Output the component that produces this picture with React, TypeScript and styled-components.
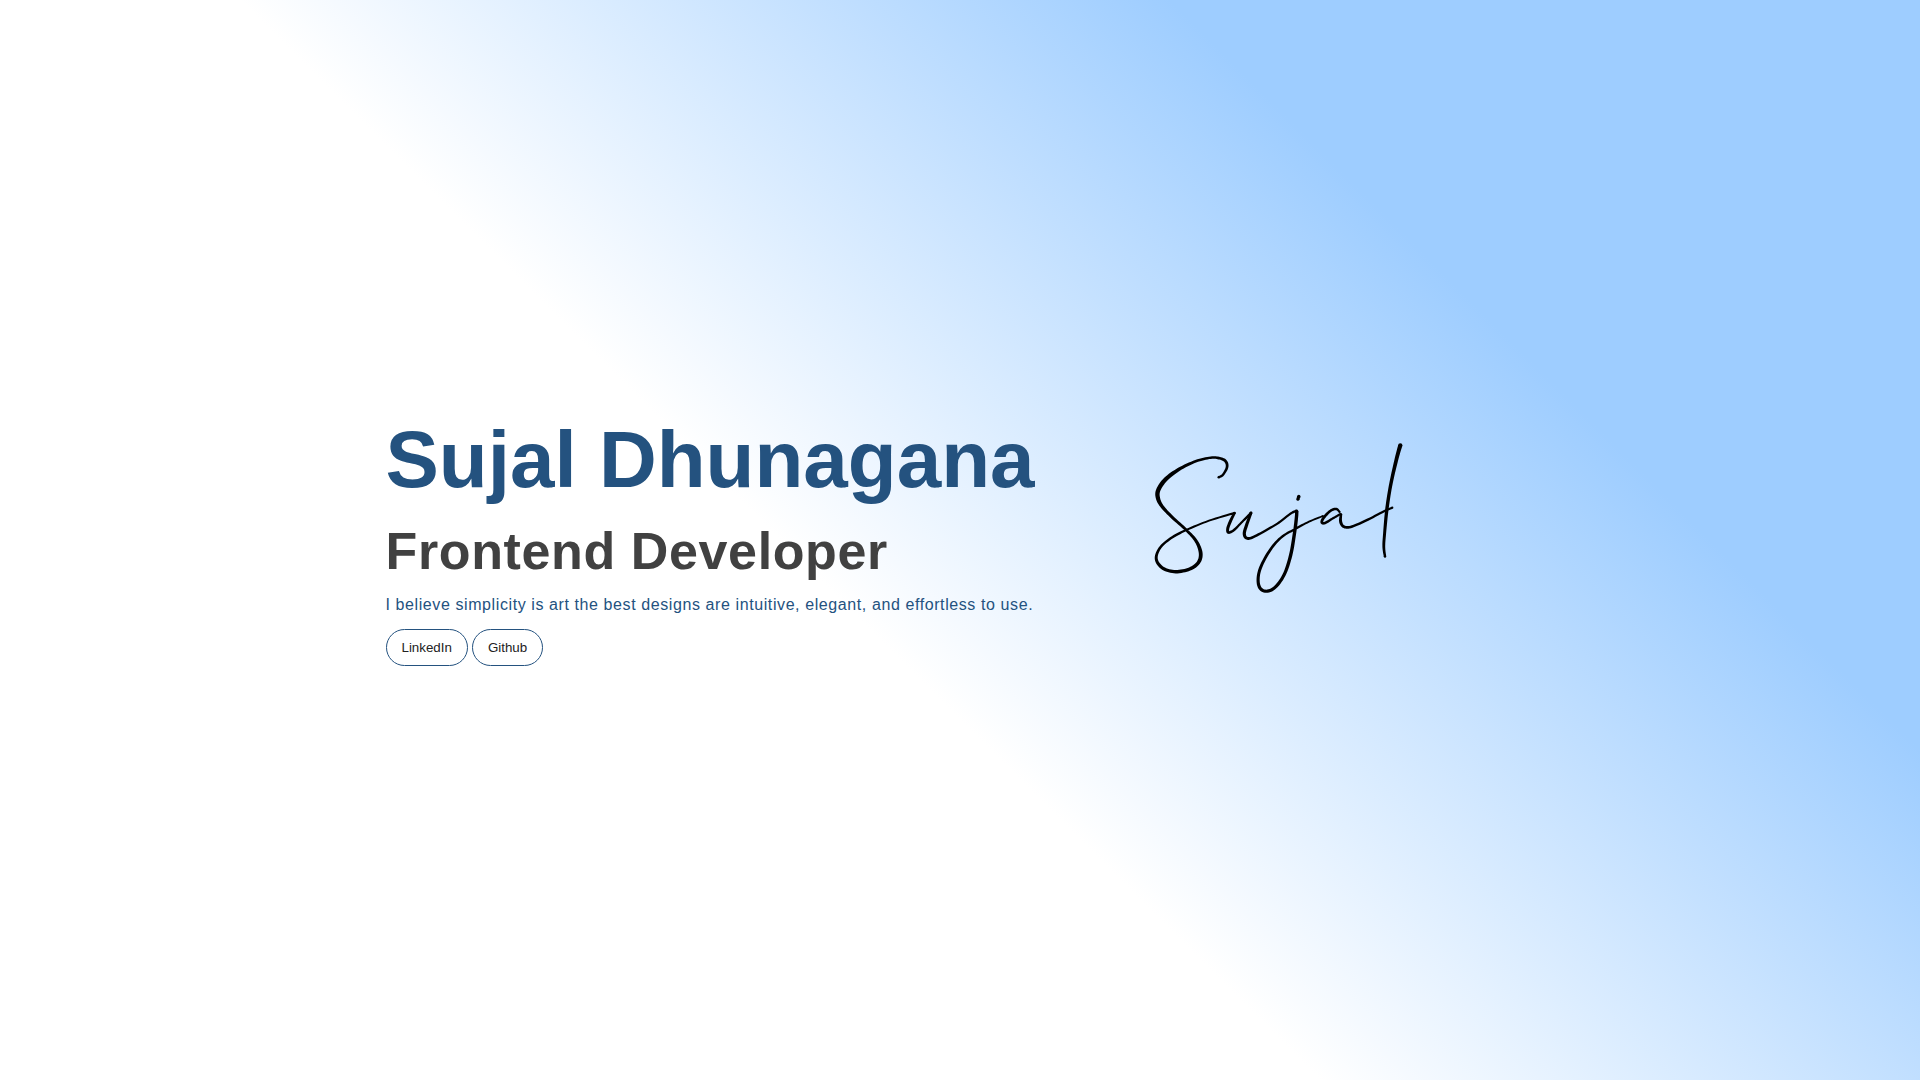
import React from "react";
import styled, { createGlobalStyle } from "styled-components";

const GlobalStyle = createGlobalStyle`
  * {
    box-sizing: border-box;
    margin: 0;
    padding: 0;
  }

  body {
    font-family: "Liberation Sans", Arial, sans-serif;
  }
`;

const Page = styled.main`
  display: flex;
  align-items: center;
  justify-content: center;
  gap: 20px;
  min-height: 100vh;
  background: linear-gradient(45deg, #ffffff 44%, #9ecdff 75%);
`;

const Intro = styled.section`
  display: flex;
  flex-direction: column;
  align-items: flex-start;
`;

const Name = styled.h1`
  color: #24527f;
  font-size: 80px;
  line-height: 92px;
`;

const Role = styled.h2`
  margin-top: 15px;
  color: #414141;
  font-size: 52px;
  line-height: 60px;
  letter-spacing: 0.012em;
`;

const Motto = styled.p`
  margin-top: 15px;
  color: #24527f;
  font-size: 16px;
  line-height: 18px;
  letter-spacing: 0.037em;
`;

const Links = styled.nav`
  display: flex;
  gap: 4px;
  margin-top: 15px;
`;

const LinkButton = styled.button`
  padding: 10px 15px;
  border: 1px solid #24527f;
  border-radius: 20px;
  background: transparent;
  color: #222222;
  font-family: inherit;
  cursor: pointer;
`;

const SignatureArt = styled.svg`
  flex: none;
  width: 480px;
  height: 240px;
  fill: #000000;
`;

// Each pen stroke is a list of [x, y, nib width].
type PenPoint = [number, number, number];

const penStrokes: PenPoint[][] = [
  // capital with its loop, up to the first peak
  [
    [1219.7, 477.3, 2], [1224, 474.7, 2], [1228, 467.3, 2.3], [1226.7, 461.3, 2.5],
    [1220.7, 458.3, 2.3], [1211.7, 457.7, 2], [1196.7, 461.3, 2.3], [1180, 469.3, 3],
    [1166.7, 479.3, 3.8], [1159.3, 490, 4], [1159, 498.3, 3.8], [1163.3, 506.7, 3],
    [1173.3, 517.3, 2.6], [1187.3, 530, 2.4], [1197.3, 541.3, 2.8], [1201.7, 553.3, 3.4],
    [1199.3, 562.7, 3.2], [1190.7, 569, 3], [1176.7, 571.7, 3], [1164, 568.3, 2.8],
    [1157.3, 559.3, 2.6], [1160.7, 548.3, 2.2], [1171.7, 538.3, 2], [1187.3, 530, 1.8],
    [1210, 520.7, 1.5], [1235.5, 513, 1.8],
  ],
  [
    [1235.5, 513, 2.2], [1231.7, 520.7, 2.6], [1228.8, 528.3, 2.6], [1229.5, 532.5, 2.4],
    [1235, 530, 2], [1243.3, 521.7, 1.8], [1252, 513, 2.2],
  ],
  [
    [1252, 513, 2.4], [1247.6, 525, 2.8], [1245.3, 533.3, 2.8], [1247.3, 538, 2.6],
    [1253.3, 537.5, 2.2], [1266.7, 530.5, 2], [1280, 522.5, 1.8], [1291.7, 513.5, 1.8],
    [1297.5, 511, 2.4],
  ],
  // descender loop and the link to the next letter
  [
    [1297.7, 511.5, 3], [1297.5, 516.7, 3], [1295.7, 531.7, 3], [1291.7, 555, 3],
    [1285, 575, 2.8], [1275, 588.3, 2.8], [1265, 591, 2.8], [1259.5, 584.3, 2.8],
    [1260.7, 570, 2.6], [1270, 551.7, 2.4], [1281.7, 537.8, 2], [1295.7, 529.2, 1.8],
    [1310, 521.7, 1.5], [1324, 516, 1.4],
  ],
  [[1299.8, 496.4, 3], [1298.9, 499.2, 2.6]],
  [
    [1340.7, 512, 1.6], [1337.3, 509, 2], [1331.7, 510.7, 2.2], [1325, 517.3, 2.4],
    [1322.8, 522.2, 2.4], [1326, 523, 2.2], [1334, 518.3, 1.8], [1341.5, 514, 1.8],
  ],
  [
    [1342, 514.5, 2], [1341.6, 521.5, 2.6], [1344.5, 526.5, 2.4], [1351.7, 526.9, 2.2],
    [1366.7, 520.7, 2], [1385, 511.3, 1.8], [1393.3, 507.7, 1.8],
  ],
  [
    [1401.3, 445.3, 3.8], [1397.7, 458.3, 3.4], [1392, 483.3, 3], [1388, 508.3, 3],
    [1385.6, 533.3, 2.6], [1384.8, 546.7, 2.4], [1386, 556.5, 2],
  ],
];

// ink spread added to every nib width
const INK = 0.4;

const STEPS = 8;

const spline = (a: number, b: number, c: number, d: number, t: number) =>
  0.5 * (2 * b + (c - a) * t + (2 * a - 5 * b + 4 * c - d) * t * t + (3 * b - a - 3 * c + d) * t * t * t);

function smooth(points: PenPoint[]): PenPoint[] {
  const at = (i: number) => points[Math.max(0, Math.min(points.length - 1, i))];
  const result: PenPoint[] = [];
  for (let i = 0; i < points.length - 1; i++) {
    for (let s = 0; s < STEPS; s++) {
      const t = s / STEPS;
      result.push([0, 1, 2].map((k) => spline(at(i - 1)[k], at(i)[k], at(i + 1)[k], at(i + 2)[k], t)) as PenPoint);
    }
  }
  result.push(points[points.length - 1]);
  return result;
}

function ribbon(line: PenPoint[]) {
  const left: string[] = [];
  const right: string[] = [];
  line.forEach(([x, y, w], i) => {
    const before = line[Math.max(0, i - 1)];
    const after = line[Math.min(line.length - 1, i + 1)];
    const dx = after[0] - before[0];
    const dy = after[1] - before[1];
    const half = (w + INK) / 2 / (Math.hypot(dx, dy) || 1);
    left.push(`${(x - dy * half).toFixed(2)} ${(y + dx * half).toFixed(2)}`);
    right.unshift(`${(x + dy * half).toFixed(2)} ${(y - dx * half).toFixed(2)}`);
  });
  return `M${[...left, ...right].join("L")}Z`;
}

function PenStroke({ points }: { points: PenPoint[] }) {
  const line = smooth(points);
  const ends = [line[0], line[line.length - 1]];
  return (
    <g>
      <path d={ribbon(line)} />
      {ends.map(([x, y, w], i) => (
        <circle key={i} cx={x} cy={y} r={(w + INK) / 2} />
      ))}
    </g>
  );
}

const links = ["LinkedIn", "Github"];

export default function App() {
  return (
    <>
      <GlobalStyle />
      <Page>
        <Intro>
          <Name>Sujal Dhunagana</Name>
          <Role>Frontend Developer</Role>
          <Motto>
            I believe simplicity is art the best designs are intuitive, elegant, and effortless to use.
          </Motto>
          <Links>
            {links.map((label) => (
              <LinkButton key={label} type="button">
                {label}
              </LinkButton>
            ))}
          </Links>
        </Intro>
        <SignatureArt viewBox="1055 420 480 240" role="img" aria-label="Signature">
          {penStrokes.map((points, i) => (
            <PenStroke key={i} points={points} />
          ))}
        </SignatureArt>
      </Page>
    </>
  );
}
